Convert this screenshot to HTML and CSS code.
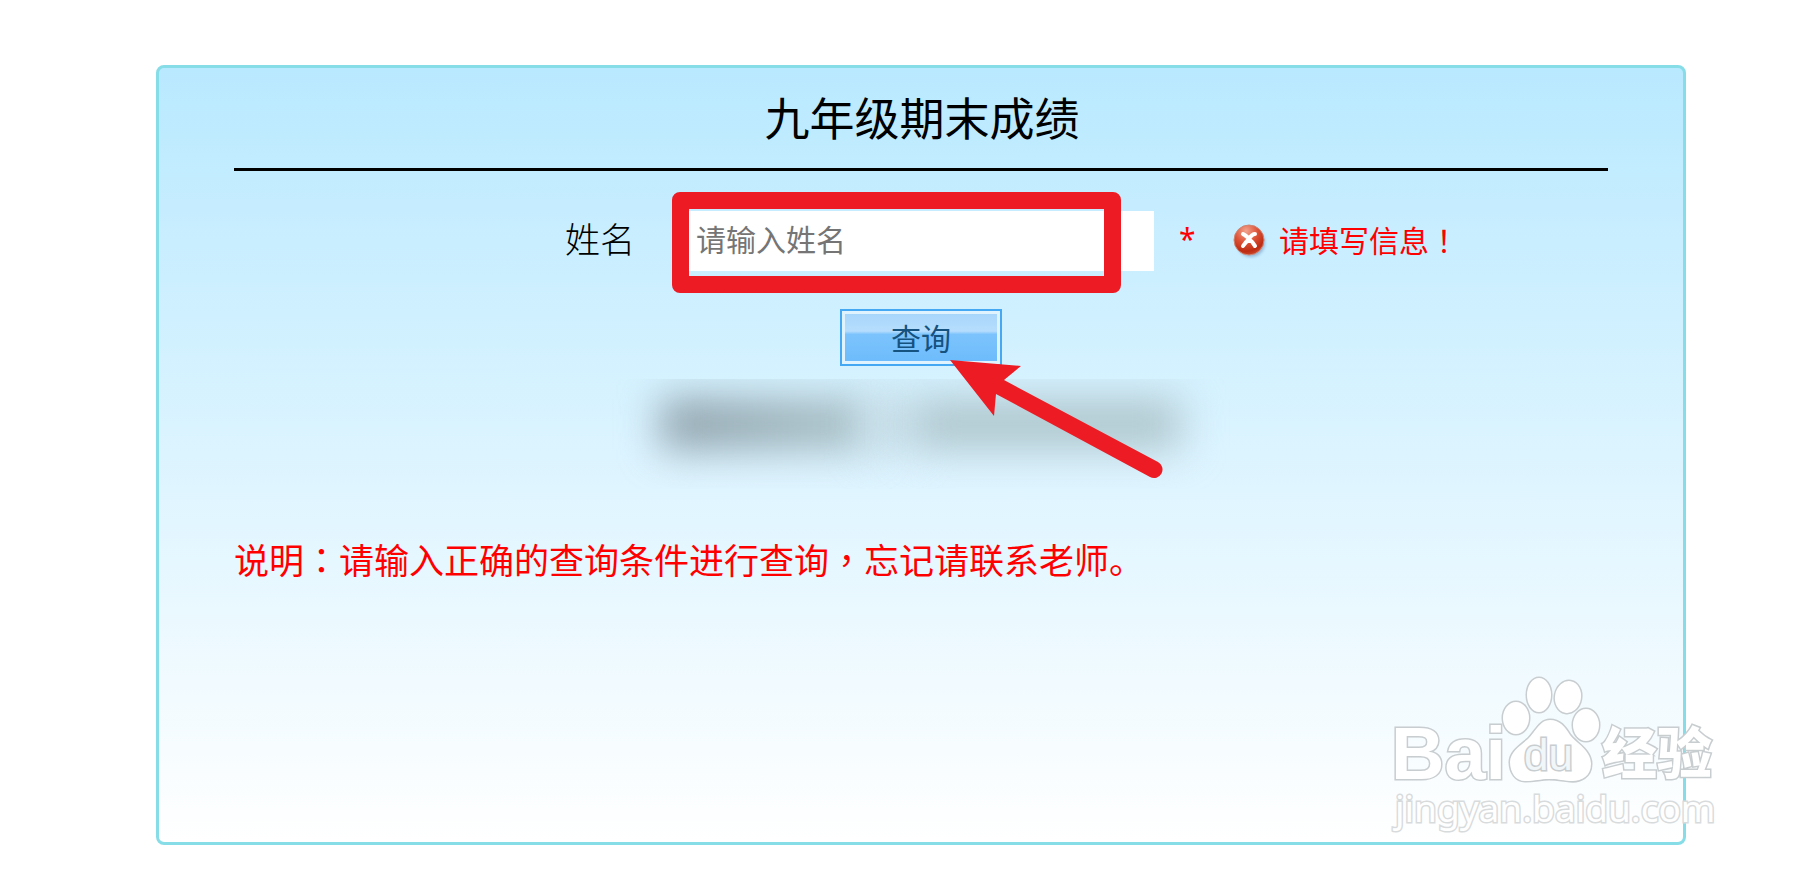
FILE: index.html
```html
<!DOCTYPE html>
<html lang="zh-CN">
<head>
<meta charset="utf-8">
<title>九年级期末成绩</title>
<link rel="stylesheet" href="styles.css">
</head>
<body>
<main class="panel">
  <h1 class="title">九年级期末成绩</h1>
  <form class="query">
    <div class="row">
      <label class="row-label" for="name">姓名</label>
      <div class="field">
        <input class="field-input" id="name" type="text" placeholder="请输入姓名">
        <span class="highlight"></span>
      </div>
      <div class="status">
        <span class="required">*</span>
        <svg class="error-icon" viewBox="0 0 36 36" aria-hidden="true">
          <defs>
            <radialGradient id="ball" cx="0.4" cy="0.2" r="0.85">
              <stop offset="0" stop-color="#f2a48e"/>
              <stop offset="0.45" stop-color="#dd5338"/>
              <stop offset="0.8" stop-color="#bd2c12"/>
              <stop offset="1" stop-color="#cf5136"/>
            </radialGradient>
            <filter id="soft" x="-20%" y="-20%" width="150%" height="150%"><feGaussianBlur stdDeviation="1.5"/></filter>
          </defs>
          <circle cx="18" cy="20" r="14" fill="#7fa3c8" opacity="0.7" filter="url(#soft)"/>
          <circle cx="16" cy="17" r="15" fill="url(#ball)" stroke="#cf8573" stroke-width="1"/>
          <path d="M10 11 Q15 14 16 16 Q19 11 22 11 M10 23 Q12 20 16 16 Q20 19 22 23" fill="none" stroke="#fff" stroke-width="4" stroke-linecap="round"/>
        </svg>
        <span class="error-text">请填写信息<span class="centered-mark" lang="zh-TW">！</span></span>
      </div>
    </div>
    <div class="actions">
      <button class="submit" type="button">查询</button>
      <svg class="arrow" viewBox="0 0 214 122" aria-hidden="true">
        <path d="M0 0 L71 6 L54 20 L208 102 A8 8 0 0 1 200 117 L46 34 L44 56 Z" fill="#ed1c24"/>
      </svg>
    </div>
  </form>
  <div class="redacted"><span class="smudge smudge-a"></span><span class="smudge smudge-gap"></span><span class="smudge smudge-b"></span></div>
  <p class="note">说明<span class="centered-mark" lang="zh-TW">：</span>请输入正确的查询条件进行查询<span class="centered-mark" lang="zh-TW">，</span>忘记请联系老师。</p>
  <svg class="watermark" viewBox="0 0 360 180">
    <g class="wm-shape">
      <text class="wm-bai" x="21" y="118">Bai</text>
      <ellipse cx="146" cy="57" rx="13" ry="16"/>
      <ellipse cx="169" cy="34" rx="12" ry="17"/>
      <ellipse cx="198" cy="36" rx="13" ry="16" transform="rotate(10 198 36)"/>
      <ellipse cx="216" cy="64" rx="13" ry="16"/>
      <path d="M180 59 C190 59 195 66 200 74 C206 82 221 89 221 103 C221 116 210 121 200 120 C190 119 188 118 179 118 C170 118 166 120 155 120 C146 120 140 112 140 101 C140 91 151 84 158 78 C166 70 170 59 180 59Z"/>
      <text class="wm-du" x="154" y="109">du</text>
      <text class="wm-cn" x="232" y="112">经验</text>
      <text class="wm-url" x="25" y="161">jingyan.baidu.com</text>
    </g>
  </svg>
</main>
</body>
</html>
```

FILE: styles.css
```css
* {
  box-sizing: border-box;
}

body {
  margin: 0;
  background: #fff;
  font-family: "Noto Sans CJK SC", sans-serif;
}

.panel {
  position: relative;
  margin: 65px 128px 26px 156px;
  padding: 0 75px 256px;
  border: 3px solid #86dde7;
  border-radius: 8px;
  background: linear-gradient(#b9e9ff, #fff);
}

.title {
  margin: 0;
  padding: 0 0 2px 2px;
  border-bottom: 3px solid #000;
  font-size: 45px;
  font-weight: 400;
  line-height: 98px;
  text-align: center;
}

.row {
  display: grid;
  grid-template-columns: minmax(120px, 446fr) 474px minmax(330px, 454fr);
  align-items: center;
  margin-top: 40px;
}

.row-label {
  padding: 0 45px 6px 0;
  font-size: 35px;
  font-weight: 300;
  line-height: 54px;
  text-align: right;
}

.field {
  position: relative;
}

.field-input {
  display: block;
  width: 100%;
  height: 60px;
  padding: 0 16px 6px;
  border: 0;
  background: #fff;
  font: 400 30px "Noto Sans CJK SC", sans-serif;
}

.field-input::placeholder {
  color: #757575;
}

.highlight {
  position: absolute;
  top: -19px;
  right: 33px;
  bottom: -22px;
  left: -8px;
  border: 17px solid #ed1c24;
  border-radius: 8px;
  pointer-events: none;
}

.status {
  display: flex;
  align-items: center;
  padding-left: 25px;
  color: #f00;
  font-size: 30px;
  line-height: 56px;
  white-space: nowrap;
}

.required {
  width: 54px;
  padding-bottom: 4px;
  font-family: "Noto Sans", sans-serif;
}

.error-icon {
  width: 36px;
  height: 36px;
  margin-right: 10px;
}

.error-text {
  padding-bottom: 4px;
}

.centered-mark {
  font-family: "Noto Sans CJK TC", sans-serif;
}

.actions {
  position: relative;
  width: 162px;
  margin: 38px auto 0;
}

.submit {
  display: block;
  width: 100%;
  height: 57px;
  padding: 0 0 2px;
  border: 2px solid #45a8f2;
  background: linear-gradient(#a5d5fb, #b6ddfd 38%, #7cc3fc 44%, #6cbbfc);
  box-shadow: inset 0 0 0 3px #dff3ff;
  color: #15527f;
  font: 400 30px "Noto Sans CJK SC", sans-serif;
}

.arrow {
  position: absolute;
  z-index: 1;
  top: 51px;
  left: 110px;
  width: 214px;
  height: 122px;
}

.redacted {
  display: flex;
  justify-content: center;
  height: 110px;
  margin-top: 13px;
  padding-top: 20px;
  overflow: hidden;
}

.smudge {
  height: 50px;
  filter: blur(20px);
}

.smudge-a {
  width: 208px;
  background: linear-gradient(90deg, #8b9da7, #a9c0c7);
}

.smudge-gap {
  width: 44px;
  background: #c4dae3;
}

.smudge-b {
  width: 268px;
  background: #aec5cc;
}

.note {
  margin: 45px 0 2px;
  color: #f00;
  font-size: 35px;
  line-height: 50px;
}

.watermark {
  position: absolute;
  right: -47px;
  bottom: 1px;
  width: 360px;
  height: 180px;
}

.wm-shape {
  fill: #fff;
  stroke: #c8cdd0;
  stroke-width: 3px;
  paint-order: stroke;
}

.wm-bai {
  font: 700 74px "Liberation Sans", Arial, sans-serif;
}

.wm-du {
  font: 400 44px "Liberation Sans", Arial, sans-serif;
  fill: #f1f6f8;
}

.wm-cn {
  font: 900 55px "Noto Sans CJK SC", sans-serif;
}

.wm-url {
  stroke: #d8dbdc;
  font: 400 37px "Noto Sans", sans-serif;
}
```
